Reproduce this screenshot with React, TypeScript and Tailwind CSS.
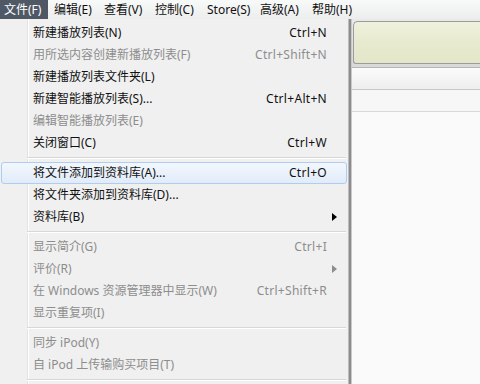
import React from 'react';

type Item =
  | { sep: true }
  | { sep?: false; label: string; shortcut?: string; disabled?: boolean; sub?: boolean; active?: boolean };

const menuBar = [
  { label: '文件(F)', w: 'w-[48px] mr-[2px] bg-[#4f5966] text-white', open: true },
  { label: '编辑(E)', w: 'w-[50px] text-[#111]' },
  { label: '查看(V)', w: 'w-[51px] text-[#111]' },
  { label: '控制(C)', w: 'w-[52px] text-[#111]' },
  { label: 'Store(S)', w: 'w-[53px] text-[#111]' },
  { label: '高级(A)', w: 'w-[52px] text-[#111]' },
  { label: '帮助(H)', w: 'w-[56px] text-[#111]' },
];

const items: Item[] = [
  { label: '新建播放列表(N)', shortcut: 'Ctrl+N' },
  { label: '用所选内容创建新播放列表(F)', shortcut: 'Ctrl+Shift+N', disabled: true },
  { label: '新建播放列表文件夹(L)' },
  { label: '新建智能播放列表(S)...', shortcut: 'Ctrl+Alt+N' },
  { label: '编辑智能播放列表(E)', disabled: true },
  { label: '关闭窗口(C)', shortcut: 'Ctrl+W' },
  { sep: true },
  { label: '将文件添加到资料库(A)...', shortcut: 'Ctrl+O', active: true },
  { label: '将文件夹添加到资料库(D)...' },
  { label: '资料库(B)', sub: true },
  { sep: true },
  { label: '显示简介(G)', shortcut: 'Ctrl+I', disabled: true },
  { label: '评价(R)', sub: true, disabled: true },
  { label: '在 Windows 资源管理器中显示(W)', shortcut: 'Ctrl+Shift+R', disabled: true },
  { label: '显示重复项(I)', disabled: true },
  { sep: true },
  { label: '同步 iPod(Y)', disabled: true },
  { label: '自 iPod 上传输购买项目(T)', disabled: true },
  { sep: true },
];

function MenuRow({ item }: { item: Item }) {
  if (item.sep) {
    return (
      <div className="h-[8px] flex flex-col justify-center pl-[27px] pr-[2px]">
        <div className="h-px bg-[#d7d7d7]" />
        <div className="h-px bg-white" />
      </div>
    );
  }
  const color = item.disabled ? 'text-[#8d8d8d]' : 'text-[#111]';
  return (
    <div className="h-[22px] px-[1px]">
      <div
        className={`h-full flex items-center pl-[31px] pr-[19px] rounded-[3px] border ${
          item.active ? 'border-[#aecdf0] bg-gradient-to-b from-[#f2f7fd] to-[#e1ecf9]' : 'border-transparent'
        } ${color}`}
      >
        <span className="flex-1 whitespace-nowrap">{item.label}</span>
        {item.shortcut && <span className="whitespace-nowrap tracking-[0.3px]">{item.shortcut}</span>}
        {item.sub && (
          <svg width="5" height="8" viewBox="0 0 5 8" className="-mr-[10px]">
            <path d="M0 0 L5 4 L0 8 Z" fill={item.disabled ? '#8d8d8d' : '#000'} />
          </svg>
        )}
      </div>
    </div>
  );
}

export default function App() {
  return (
    <div
      className="w-[480px] h-[384px] overflow-hidden flex flex-col bg-[#fafafa] text-[12px]"
      style={{ fontFamily: '"Noto Sans", "Noto Sans CJK SC", sans-serif' }}
    >
      <div className="h-[19px] flex bg-gradient-to-b from-[#f8f9f9] to-[#eceded]">
        {menuBar.map((m) => (
          <div key={m.label} className={`${m.w} h-full flex items-center pl-[4px] whitespace-nowrap`}>
            {m.label}
          </div>
        ))}
      </div>
      <div className="flex-1 flex min-h-0">
        <div className="w-[348px] relative bg-[#f0f0f0] pt-[3px] flex flex-col">
          <div className="absolute left-[27px] top-0 bottom-0 w-[2px] flex">
            <div className="w-px bg-[#e2e3e3]" />
            <div className="w-px bg-white" />
          </div>
          <div className="relative flex flex-col">
            {items.map((it, i) => (
              <MenuRow key={i} item={it} />
            ))}
          </div>
        </div>
        <div className="w-[4px] flex">
          <div className="w-px bg-[#bcbcbc]" />
          <div className="w-[2px] bg-[#8c8c8c]" />
          <div className="w-px bg-[#c9c9c9]" />
        </div>
        <div className="flex-1 flex flex-col">
          <div className="h-[49px] bg-gradient-to-b from-[#e9e9e9] to-[#d9d9d9] pt-[2px] pl-[1px] border-b border-[#b5b5b5]">
            <div className="h-[43px] rounded-tl-[5px] rounded-bl-[3px] border border-r-0 border-[#9c9c9c] bg-gradient-to-b from-[#eff1dd] via-[#e8eacf] to-[#e3e6c9]" />
          </div>
          <div className="h-[22px] bg-gradient-to-b from-[#fbfbfb] to-[#eeeeee] border-b border-[#c8c8c8]" />
          <div className="h-[22px] bg-[#f7f7f7] border-b border-[#d8d8d8]" />
          <div className="flex-1 bg-[#fafafa]" />
        </div>
      </div>
    </div>
  );
}
